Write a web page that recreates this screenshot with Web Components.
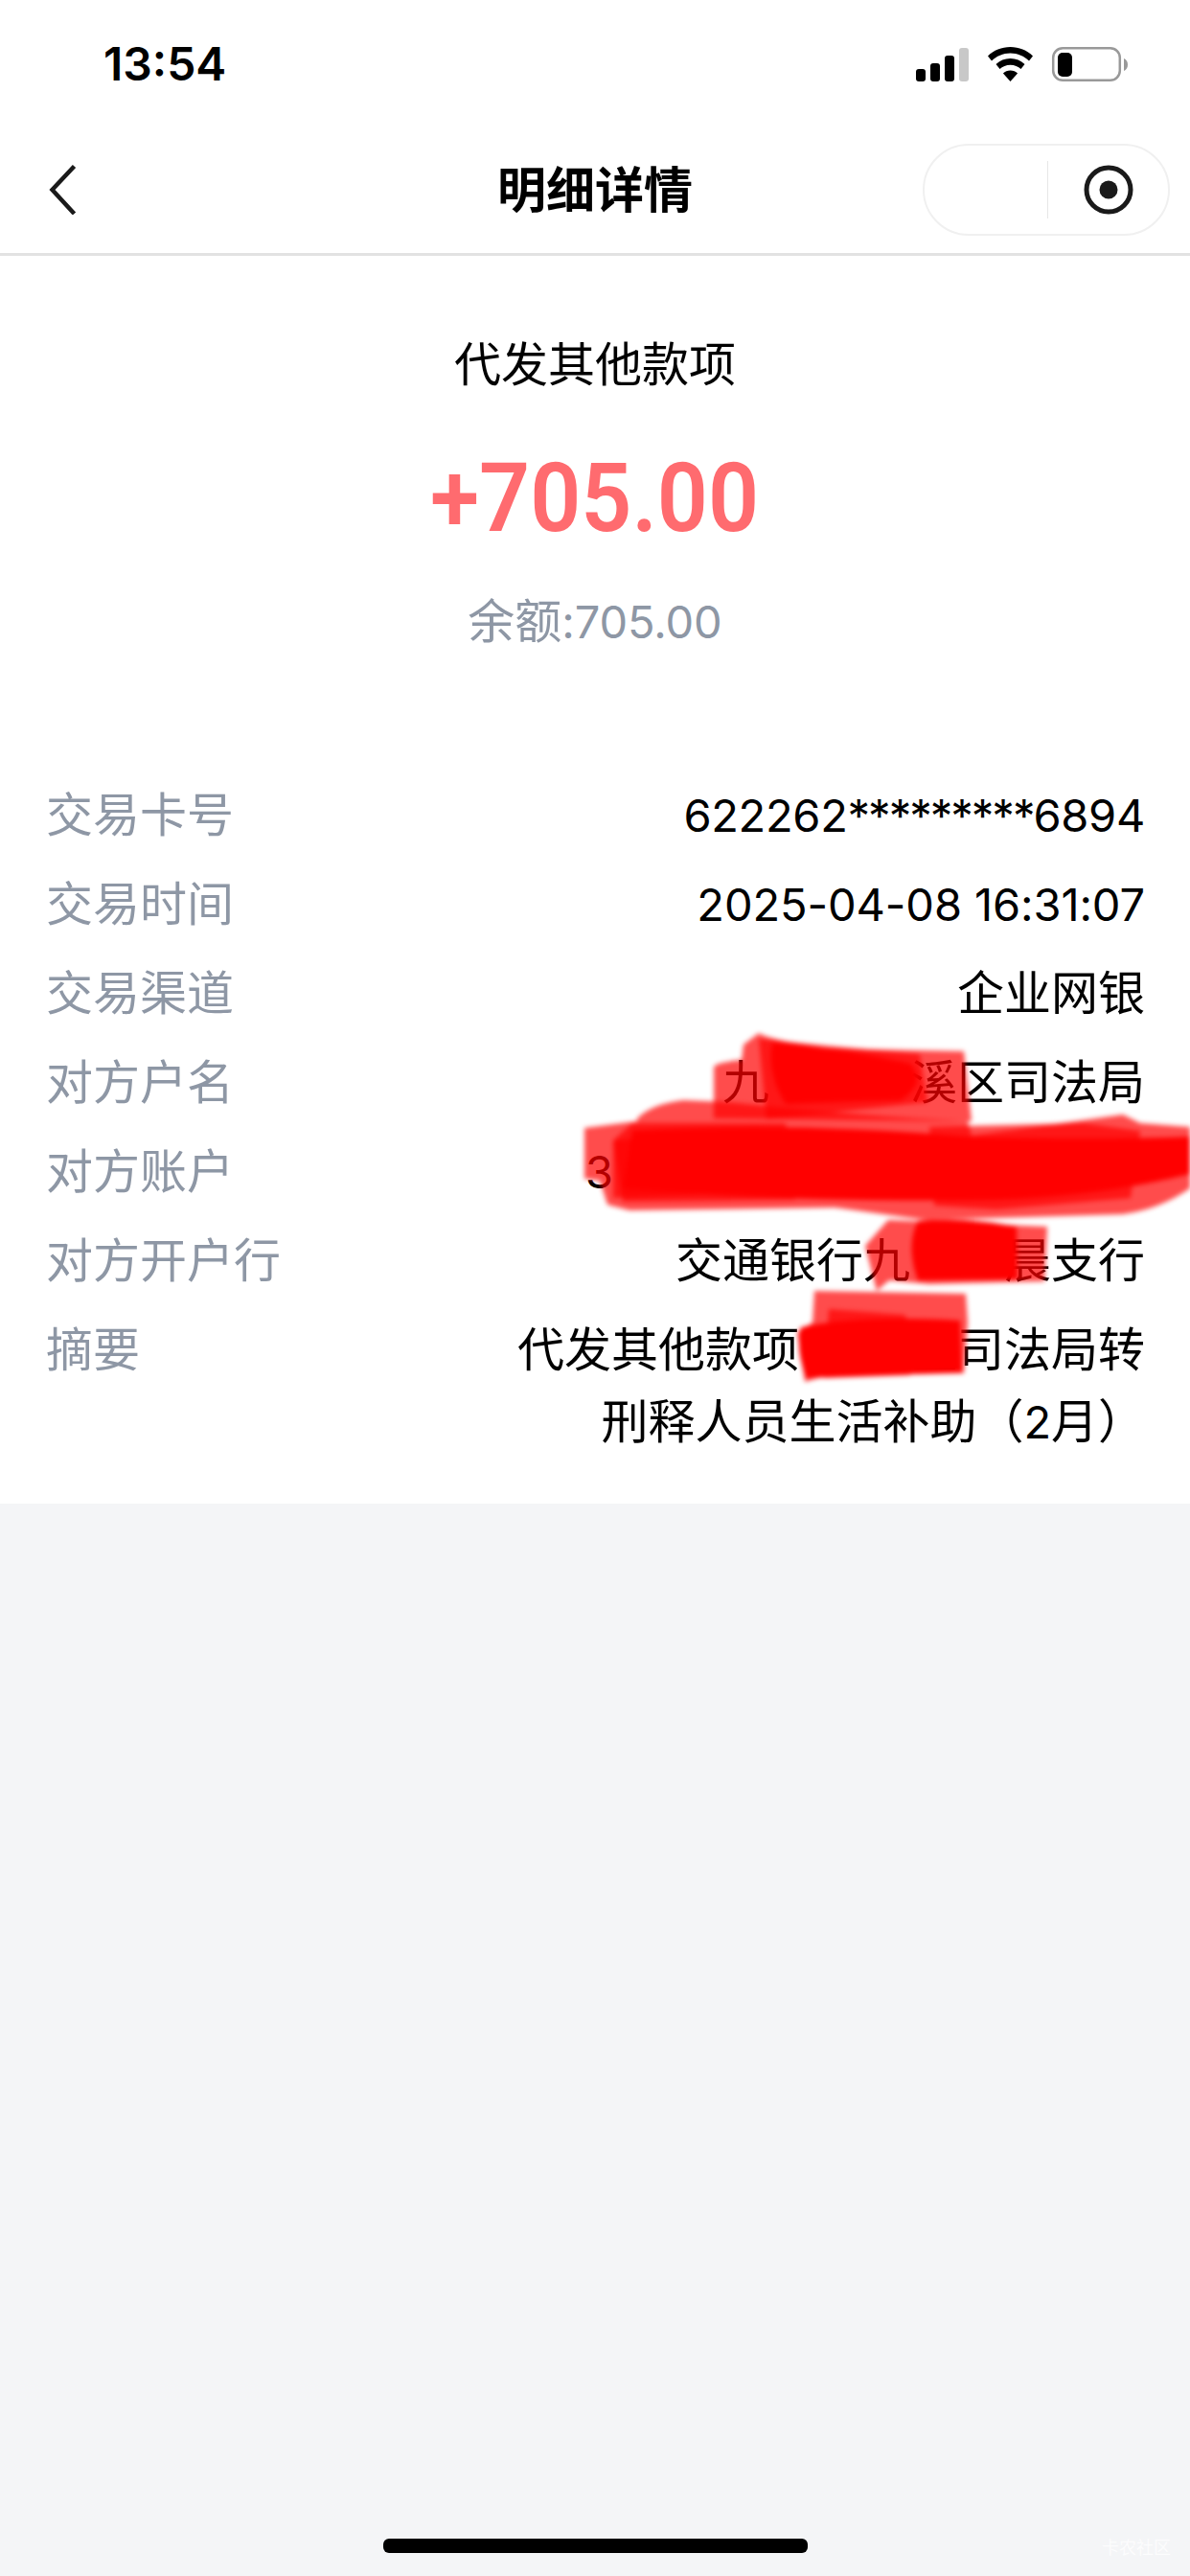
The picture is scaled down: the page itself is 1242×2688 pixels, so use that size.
<!DOCTYPE html>
<html lang="zh">
<head>
<meta charset="utf-8">
<title>明细详情</title>
<style>
  html, body { margin: 0; padding: 0; }
  body {
    width: 1242px;
    height: 2688px;
    position: relative;
    overflow: hidden;
    display: flex;
    flex-direction: column;
    background: #f4f5f7;
    font-family: Inter, "Noto Sans CJK SC", sans-serif;
  }
  .n { font-size: 47px; letter-spacing: -0.1px; }
  .c { font-size: 47px; letter-spacing: -0.3px; }
  .s { font-size: 47px; letter-spacing: -2px; }
</style>
</head>
<body>
  <status-bar time="13:54"></status-bar>
  <nav-bar>明细详情</nav-bar>
  <detail-page>
    <amount-head slot="head" kind="代发其他款项" amount="+705.00"><span>余额</span><span class="n">:705.00</span></amount-head>
    <detail-row label="交易卡号"><span class="c">622262</span><span class="s">*********</span><span class="c">6894</span></detail-row>
    <detail-row label="交易时间"><span class="n">2025-04-08 16:31:07</span></detail-row>
    <detail-row label="交易渠道">企业网银</detail-row>
    <detail-row label="对方户名">九　　　溪区司法局</detail-row>
    <detail-row label="对方账户"><span class="n">3</span><span style="display:inline-block;width:555px"></span></detail-row>
    <detail-row label="对方开户行">交通银行九　　晨支行</detail-row>
    <detail-row label="摘要">代发其他款项<span style="display:inline-block;width:116px"></span>区司法局转<br>刑释人员生活补助（<span class="n">2</span>月）</detail-row>
  </detail-page>
  <home-bar></home-bar>
  <redact-marks></redact-marks>

<script>
const font = 'Inter, "Noto Sans CJK SC", sans-serif';

class StatusBar extends HTMLElement {
  constructor() {
    super();
    this.attachShadow({ mode: 'open' });
    this.shadowRoot.innerHTML = `
      <style>
        :host { display: flex; align-items: center; justify-content: space-between; height: 134px; background: #fff; padding: 0 64px 0 108px; box-sizing: border-box; }
        .time { font: 600 48px/1 ${font}; color: #000; }
        svg { display: block; }
      </style>
      <span class="time">${this.getAttribute('time')}</span>
      <svg width="222" height="38" viewBox="957 48 222 38">
        <rect x="957" y="72" width="10" height="13" rx="3"/>
        <rect x="972" y="66" width="10" height="19" rx="3"/>
        <rect x="987" y="58" width="10" height="27" rx="3"/>
        <rect x="1002" y="50" width="10" height="35" rx="3" fill="#c8c8c8"/>
        <path d="M1055.5 49c-9 0-17.500 3.500-23.500 9.500l4 5c5-5 12-8 19.500-8s14.500 3 19.500 8l4-5c-6-6-14.500-9.500-23.500-9.500z"/>
        <path d="M1055.500 61c-5.800 0-11 2.300-15 6l4 5c2.800-2.700 6.700-4.300 11-4.300s8.200 1.600 11 4.300l4-5c-4-3.700-9.200-6-15-6z"/>
        <path d="M1055.500 73.500c-3 0-5.600 1.100-7.600 3l7.600 8.500 7.600-8.500c-2-1.900-4.600-3-7.600-3z"/>
        <rect x="1100.200" y="50.200" width="69.600" height="33.600" rx="10" fill="none" stroke="#999" stroke-width="2.500"/>
        <rect x="1105" y="55" width="15" height="25" rx="5"/>
        <path d="M1174 61c2.500 1 4 3.500 4 6.500s-1.500 5.500-4 6.500z" fill="#999"/>
      </svg>
    `;
  }
}
customElements.define('status-bar', StatusBar);

class NavBar extends HTMLElement {
  constructor() {
    super();
    this.attachShadow({ mode: 'open' });
    this.shadowRoot.innerHTML = `
      <style>
        :host { display: grid; grid-template-columns: 1fr auto 1fr; align-items: center; height: 133px; box-sizing: border-box; background: #fff; border-bottom: 3px solid #e2e2e2; padding: 0 21px 2px; }
        .title { font: 700 51px/1 ${font}; color: #000; }
        .capsule { justify-self: end; box-sizing: border-box; width: 258px; height: 96px; border: 2px solid #f0f0f0; border-radius: 48px; display: grid; grid-template-columns: 128px 1px 1fr; align-items: center; }
        .line { height: 60px; background: #e6e6e6; }
        .dot { justify-self: center; display: block; }
        .back { display: block; margin-left: 28px; }
      </style>
      <svg class="back" width="32" height="52" viewBox="0 0 32 52" fill="none" stroke="#1a1a1a" stroke-width="4.500">
        <path d="M28.500 1.500L5.500 26l23 25"/>
      </svg>
      <span class="title"><slot></slot></span>
      <div class="capsule">
        <span></span>
        <span class="line"></span>
        <svg class="dot" width="52" height="52" viewBox="0 0 52 52">
          <circle cx="26" cy="26" r="23" fill="none" stroke="#1a1a1a" stroke-width="5"/>
          <circle cx="26" cy="26" r="9.500" fill="#1a1a1a"/>
        </svg>
      </div>
    `;
  }
}
customElements.define('nav-bar', NavBar);

class AmountHead extends HTMLElement {
  constructor() {
    super();
    this.attachShadow({ mode: 'open' });
    this.shadowRoot.innerHTML = `
      <style>
        :host { display: flex; flex-direction: column; align-items: center; padding-top: 84px; }
        .kind { font: 400 49px/60px ${font}; color: #000; }
        .amount { font: 600 100px/120px Roboto, sans-serif; color: #ff6b6f; margin-top: 49px; transform: scaleX(.93); }
        .balance { font: 400 49px/60px ${font}; color: #8e97a5; margin-top: 39px; }
      </style>
      <div class="kind">${this.getAttribute('kind')}</div>
      <div class="amount">${this.getAttribute('amount')}</div>
      <div class="balance"><slot></slot></div>
    `;
  }
}
customElements.define('amount-head', AmountHead);

class DetailPage extends HTMLElement {
  constructor() {
    super();
    this.attachShadow({ mode: 'open' });
    this.shadowRoot.innerHTML = `
      <style>
        :host { display: block; background: #fff; padding-bottom: 48px; }
        .rows { display: flex; flex-direction: column; gap: 18px; padding: 134px 47px 0 48px; }
      </style>
      <slot name="head"></slot>
      <div class="rows"><slot></slot></div>
    `;
  }
}
customElements.define('detail-page', DetailPage);

class DetailRow extends HTMLElement {
  constructor() {
    super();
    this.attachShadow({ mode: 'open' });
    this.shadowRoot.innerHTML = `
      <style>
        :host { display: flex; justify-content: space-between; align-items: flex-start; font: 400 49px/75px ${font}; }
        .label { color: #8e97a5; flex: none; }
        .value { color: #000; text-align: right; }
      </style>
      <span class="label">${this.getAttribute('label')}</span>
      <span class="value"><slot></slot></span>
    `;
  }
}
customElements.define('detail-row', DetailRow);

class HomeBar extends HTMLElement {
  constructor() {
    super();
    this.attachShadow({ mode: 'open' });
    this.shadowRoot.innerHTML = `
      <style>
        :host { display: flex; justify-content: center; margin-top: auto; padding-bottom: 24px; }
        div { width: 443px; height: 15px; border-radius: 6px; background: #000; }
      </style>
      <div></div>
    `;
  }
}
customElements.define('home-bar', HomeBar);

// red scribbles and the faint watermark lie on top of the page
class RedactMarks extends HTMLElement {
  constructor() {
    super();
    this.attachShadow({ mode: 'open' });
    this.shadowRoot.innerHTML = `
      <style>
        :host { display: block; position: absolute; inset: 0; pointer-events: none; }
        svg { position: absolute; left: 0; top: 0; }
        .mark { position: absolute; left: 1150px; top: 2646px; font: 400 18px/22px "Noto Sans CJK SC", sans-serif; color: rgba(255,255,255,.75); }
      </style>
      <svg width="1242" height="2688" viewBox="0 0 1242 2688">
        <defs><filter id="soft" x="-5%" y="-5%" width="110%" height="110%"><feGaussianBlur stdDeviation="2.500"/></filter></defs>
        <g fill="#ff0000" fill-opacity=".7" filter="url(#soft)">
          <path d="M745 1113Q750 1108 774 1106L776 1090 792 1078Q800 1084 860 1094L1006 1097 1014 1170 745 1167z"/>
          <path d="M792 1084Q850 1090 960 1100L968 1150 800 1168z"/>
          <path d="M806 1088Q880 1094 950 1110Q968 1130 940 1148L820 1152Q800 1120 806 1088z" fill-opacity="1"/>

          <path d="M665 1167Q680 1152 713 1148L760 1150Q900 1165 1010 1170L1014 1185 1172 1163 1190 1172 1242 1176 1242 1240Q1210 1262 1172 1267L966 1273 871 1260 657 1263 634 1257 626 1232 610 1230 610 1177 665 1170z"/>
          <path d="M660 1172L820 1172 830 1252 650 1254 640 1190z"/>
          <path d="M660 1180Q820 1170 1010 1186Q1140 1190 1242 1186L1242 1225Q1150 1248 1040 1252Q820 1255 650 1240z" fill-opacity="1"/>
          <path d="M970 1176L1130 1172 1190 1180 1180 1250 1040 1262 975 1258z"/>
          <path d="M640 1190L760 1180 770 1245 640 1250z"/>

          <path d="M927 1273L1093 1280 1090 1337 970 1340 928 1336 915 1347 903 1300z"/>
          <path d="M958 1274Q1010 1270 1061 1280L1062 1335 958 1336Q945 1300 958 1274z" fill-opacity="1"/>

          <path d="M850 1347L1008 1350 1010 1380 1006 1433 860 1436 840 1442 832 1390 848 1380z"/>
          <path d="M865 1366L945 1372 950 1435 860 1438z"/>
          <path d="M836 1385Q900 1372 1002 1378L1004 1432 842 1438Q830 1410 836 1385z" fill-opacity="1"/>
        </g>
      </svg>
      <span class="mark">卡农社区</span>
    `;
  }
}
customElements.define('redact-marks', RedactMarks);
</script>
</body>
</html>
